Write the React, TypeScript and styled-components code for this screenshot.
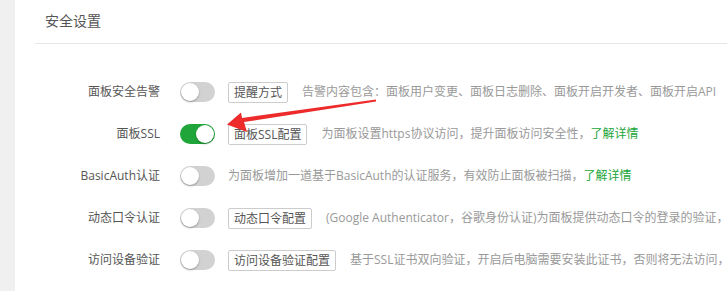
import React from 'react';
import styled, { createGlobalStyle } from 'styled-components';

const GlobalStyle = createGlobalStyle`
  html, body {
    margin: 0;
    padding: 0;
    background: #fff;
  }
  body {
    font-family: "Open Sans", "Noto Sans CJK SC", sans-serif;
    font-size: 12px;
    color: #555;
  }
`;

type Setting = {
  label: string;
  on: boolean;
  button?: string;
  desc: string;
  link?: string;
};

const SETTINGS: Setting[] = [
  {
    label: '面板安全告警',
    on: false,
    button: '提醒方式',
    desc: '告警内容包含：面板用户变更、面板日志删除、面板开启开发者、面板开启API',
  },
  {
    label: '面板SSL',
    on: true,
    button: '面板SSL配置',
    desc: '为面板设置https协议访问，提升面板访问安全性，',
    link: '了解详情',
  },
  {
    label: 'BasicAuth认证',
    on: false,
    desc: '为面板增加一道基于BasicAuth的认证服务，有效防止面板被扫描，',
    link: '了解详情',
  },
  {
    label: '动态口令认证',
    on: false,
    button: '动态口令配置',
    desc: '(Google Authenticator，谷歌身份认证)为面板提供动态口令的登录的验证，',
  },
  {
    label: '访问设备验证',
    on: false,
    button: '访问设备验证配置',
    desc: '基于SSL证书双向验证，开启后电脑需要安装此证书，否则将无法访问，',
  },
];

const App = () => {
  return (
    <>
      <GlobalStyle />
      <Page>
        <Sidebar />
        <Panel>
          <Title>安全设置</Title>
          <Rows>
            {SETTINGS.map((s) => (
              <Row key={s.label}>
                <Label>{s.label}</Label>
                <Switch on={s.on}>
                  <Knob on={s.on} />
                </Switch>
                {s.button && <Button>{s.button}</Button>}
                <Desc>
                  {s.desc}
                  {s.link && <Link>{s.link}</Link>}
                </Desc>
              </Row>
            ))}
          </Rows>
        </Panel>
        <Arrow width="727" height="291" viewBox="0 0 727 291">
          <polygon
            fill="#ee2b2b"
            points="376,99.5 376,101.5 244,122 247,132 227,124.5 241,112.5 242,118"
          />
        </Arrow>
      </Page>
    </>
  );
};

const Page = styled.div`
  position: relative;
  display: flex;
  width: 727px;
  height: 291px;
  overflow: hidden;
`;

const Sidebar = styled.div`
  width: 15px;
  flex-shrink: 0;
  background: #f0f0f0;
`;

const Panel = styled.div`
  flex: 1;
  min-width: 0;
  padding-left: 20px;
  background: #fff;
`;

const Title = styled.div`
  height: 43px;
  line-height: 42px;
  padding-left: 10px;
  font-size: 14px;
  color: #555;
  border-bottom: 1px solid #e6e6e6;
`;

const Rows = styled.div`
  padding-top: 27px;
`;

const Row = styled.div`
  display: flex;
  align-items: center;
  height: 42px;
  white-space: nowrap;
`;

const Label = styled.div`
  width: 125px;
  flex-shrink: 0;
  text-align: right;
  margin-right: 20px;
  color: #555;
  line-height: 20px;
`;

const Switch = styled.div<{ on: boolean }>`
  position: relative;
  width: 35px;
  height: 20px;
  flex-shrink: 0;
  border-radius: 10px;
  background: ${(p) => (p.on ? '#20a53a' : '#d2d2d2')};
  margin-right: 13px;
`;

const Knob = styled.span<{ on: boolean }>`
  position: absolute;
  top: 1px;
  left: ${(p) => (p.on ? '16px' : '1px')};
  width: 18px;
  height: 18px;
  border-radius: 50%;
  background: #fff;
  box-shadow: 0 1px 2px rgba(0, 0, 0, 0.3);
`;

const Button = styled.span`
  flex-shrink: 0;
  height: 19px;
  line-height: 19px;
  padding: 0 5px;
  border: 1px solid #ccc;
  border-radius: 2px;
  color: #555;
  background: #fff;
  margin-right: 14px;
`;

const Desc = styled.span`
  color: #999;
  line-height: 20px;
`;

const Link = styled.span`
  color: #20a53a;
`;

const Arrow = styled.svg`
  position: absolute;
  left: 0;
  top: 0;
  pointer-events: none;
`;

export default App;
